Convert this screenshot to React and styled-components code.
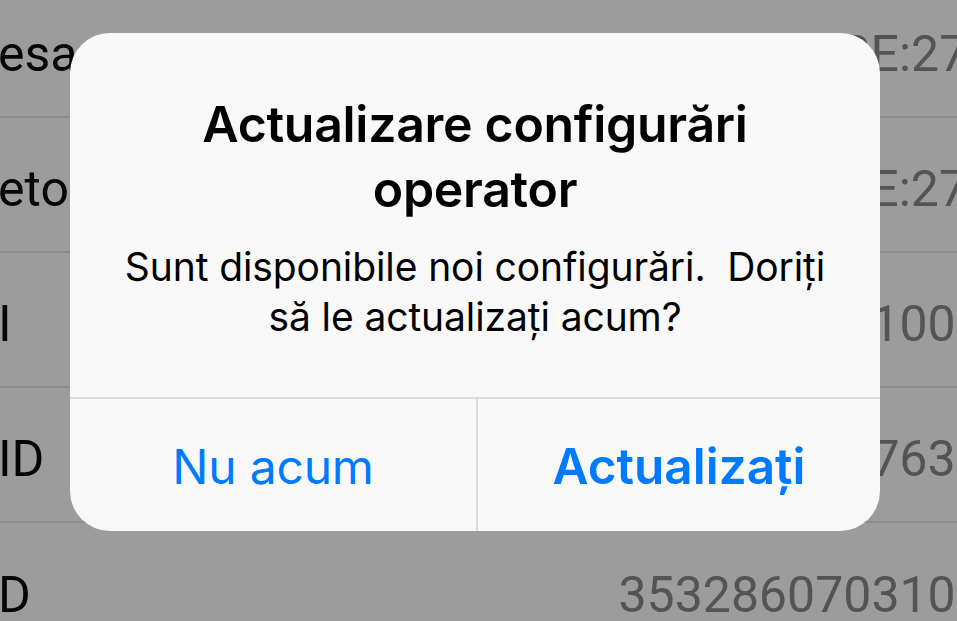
import React from 'react';
import styled, { createGlobalStyle } from 'styled-components';

const GlobalStyle = createGlobalStyle`
  html, body {
    margin: 0;
    padding: 0;
    background: #9c9c9c;
    overflow: hidden;
  }
  body {
    font-family: Inter, "Noto Sans", "Liberation Sans", sans-serif;
    -webkit-font-smoothing: antialiased;
  }
`;

const Screen = styled.div`
  position: relative;
  width: 957px;
  height: 621px;
  overflow: hidden;
  background: #9c9c9c;
`;

// settings list behind the dimmed overlay, wider than the screen so values run off the right edge
const List = styled.div`
  display: flex;
  flex-direction: column;
  width: 1042px;
  margin-top: -17px;
  margin-left: -2px;
  font-family: Roboto, "Liberation Sans", sans-serif;
`;

const Row = styled.div`
  display: flex;
  align-items: center;
  justify-content: space-between;
  height: 135px;
  padding-top: 8px;
  box-sizing: border-box;
  border-bottom: ${p => (p.$last ? 'none' : '2px solid #8c8c8c')};
  font-size: 50px;
`;

const Label = styled.span`
  color: #060606;
  white-space: nowrap;
`;

const Value = styled.span`
  color: #545456;
  white-space: nowrap;
  font-variant-numeric: tabular-nums;
`;

const Alert = styled.div`
  position: absolute;
  left: 70px;
  top: 33px;
  width: 810px;
  height: 498px;
  border-radius: 40px;
  background: #f8f8f8;
  display: flex;
  flex-direction: column;
  overflow: hidden;
`;

const AlertBody = styled.div`
  flex: 1;
  display: flex;
  flex-direction: column;
  align-items: center;
  padding: 59px 36px 0;
  text-align: center;
`;

const Title = styled.div`
  font-size: 50px;
  line-height: 65px;
  font-weight: 600;
  letter-spacing: -0.3px;
  color: #000;
`;

const Message = styled.div`
  margin-top: 20px;
  font-size: 39px;
  line-height: 50px;
  letter-spacing: -0.1px;
  color: #000;
  white-space: pre-wrap;
`;

const Actions = styled.div`
  display: grid;
  grid-template-columns: 406px 1fr;
  height: 132px;
  border-top: 2px solid #dbdbdf;
`;

const ActionButton = styled.button`
  border: none;
  border-left: ${p => (p.$divider ? '2px solid #dbdbdf' : 'none')};
  background: transparent;
  font-family: inherit;
  font-size: ${p => (p.$primary ? '49.5px' : '48px')};
  letter-spacing: ${p => (p.$primary ? '0' : '-0.2px')};
  font-weight: ${p => (p.$primary ? 600 : 400)};
  color: #007aff;
  padding: 2px 0 0;
`;

const rows = [
  { label: 'esa', value: 'D0:2E:27:5C' },
  { label: 'etoo', value: 'D0:2E:27:5D' },
  { label: 'I', value: '100348' },
  { label: 'ID', value: '89400763701' },
  { label: 'D', value: '353286070310814' }
];

export default function App() {
  return (
    <Screen>
      <GlobalStyle />
      <List>
        {rows.map((r, i) => (
          <Row key={i} $last={i === rows.length - 1}>
            <Label>{r.label}</Label>
            <Value>{r.value}</Value>
          </Row>
        ))}
      </List>
      <Alert>
        <AlertBody>
          <Title>Actualizare configurări operator</Title>
          <Message>{'Sunt disponibile noi configurări.  Doriți\nsă le actualizați acum?'}</Message>
        </AlertBody>
        <Actions>
          <ActionButton>Nu acum</ActionButton>
          <ActionButton $divider $primary>Actualizați</ActionButton>
        </Actions>
      </Alert>
    </Screen>
  );
}
